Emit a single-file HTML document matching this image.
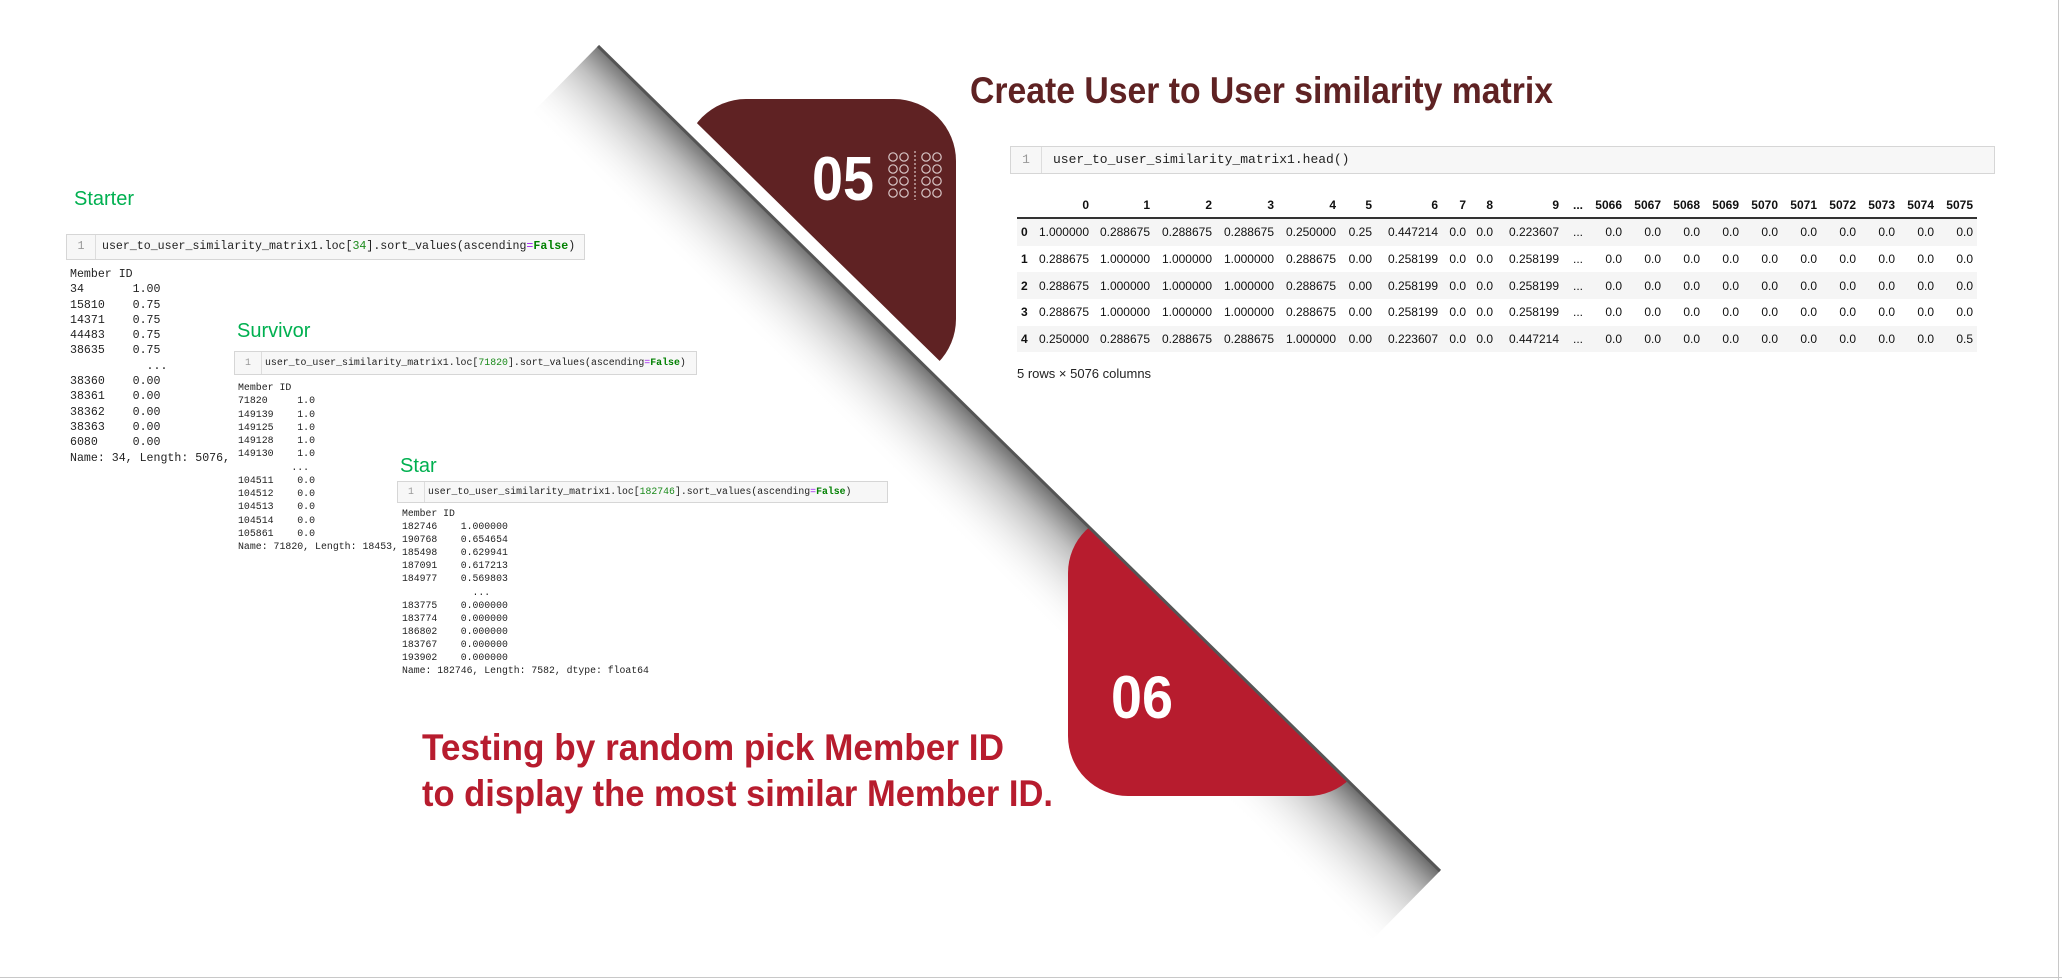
<!DOCTYPE html>
<html><head><meta charset="utf-8"><style>
html,body{margin:0;padding:0;}
body{width:2062px;height:980px;position:relative;overflow:hidden;background:#fff;font-family:"Liberation Sans",sans-serif;}
.abs{position:absolute;}
.lbl{position:absolute;color:#00b050;font-family:"Liberation Sans",sans-serif;font-size:20px;line-height:1;}
.cell{position:absolute;background:#f7f7f7;border:1px solid #d6d6d6;box-sizing:border-box;font-family:"Liberation Mono",monospace;color:#222;white-space:pre;}
.gut{position:absolute;left:0;top:0;bottom:0;border-right:1px solid #ddd;color:#999;text-align:center;}
.out{position:absolute;font-family:"Liberation Mono",monospace;white-space:pre;color:#222;}
.g{color:#1a8a1a;}
.k{color:#008000;font-weight:bold;}
.p{color:#a020f0;}
table{border-collapse:collapse;table-layout:fixed;font-size:12px;font-family:"Liberation Sans",sans-serif;color:#111;}
td,th{text-align:right;padding:0 4px 0 0;height:26.7px;white-space:nowrap;overflow:hidden;}
th{font-weight:bold;height:25px;}
thead tr{border-bottom:2px solid #333;}
tbody tr:nth-child(odd){background:#f5f5f5;}
td.i{font-weight:bold;text-align:left;padding-left:4px;}
</style></head><body>

<div class="lbl" style="left:74px;top:189px;">Starter</div>
<div class="cell" style="left:66px;top:234px;width:519px;height:26px;font-size:11.6px;line-height:24px;"><div class="gut" style="width:28px;">1</div><span style="position:absolute;left:35px;top:0;">user_to_user_similarity_matrix1.loc[<span class="g">34</span>].sort_values(ascending<span class="p">=</span><span class="k">False</span>)</span></div>
<div class="out" style="left:70px;top:267px;font-size:11.6px;line-height:15.3px;">Member ID
34       1.00
15810    0.75
14371    0.75
44483    0.75
38635    0.75
           ...
38360    0.00
38361    0.00
38362    0.00
38363    0.00
6080     0.00
Name: 34, Length: 5076,</div>

<div class="lbl" style="left:237px;top:321px;">Survivor</div>
<div class="cell" style="left:234px;top:351px;width:463px;height:24px;font-size:9.9px;line-height:22px;"><div class="gut" style="width:26px;">1</div><span style="position:absolute;left:30px;top:0;">user_to_user_similarity_matrix1.loc[<span class="g">71820</span>].sort_values(ascending<span class="p">=</span><span class="k">False</span>)</span></div>
<div class="out" style="left:238px;top:381px;font-size:9.9px;line-height:13.25px;">Member ID
71820     1.0
149139    1.0
149125    1.0
149128    1.0
149130    1.0
         ...
104511    0.0
104512    0.0
104513    0.0
104514    0.0
105861    0.0
Name: 71820, Length: 18453,</div>

<div class="lbl" style="left:400px;top:456px;">Star</div>
<div class="cell" style="left:397px;top:481px;width:491px;height:22px;font-size:9.8px;line-height:20px;"><div class="gut" style="width:26px;">1</div><span style="position:absolute;left:30px;top:0;">user_to_user_similarity_matrix1.loc[<span class="g">182746</span>].sort_values(ascending<span class="p">=</span><span class="k">False</span>)</span></div>
<div class="out" style="left:402px;top:507px;font-size:9.8px;line-height:13.1px;">Member ID
182746    1.000000
190768    0.654654
185498    0.629941
187091    0.617213
184977    0.569803
            ...
183775    0.000000
183774    0.000000
186802    0.000000
183767    0.000000
193902    0.000000
Name: 182746, Length: 7582, dtype: float64</div>

<div class="cell" style="left:1010px;top:146px;width:985px;height:28px;font-size:13px;line-height:26px;"><div class="gut" style="width:30px;">1</div><span style="position:absolute;left:42px;top:0;">user_to_user_similarity_matrix1.head()</span></div>

<table class="abs" style="left:1017px;top:192px;width:960px;">
<colgroup><col style="width:18px"><col style="width:58px"><col style="width:61px"><col style="width:62px"><col style="width:62px"><col style="width:62px"><col style="width:36px"><col style="width:66px"><col style="width:28px"><col style="width:27px"><col style="width:66px"><col style="width:24px"><col style="width:39px"><col style="width:39px"><col style="width:39px"><col style="width:39px"><col style="width:39px"><col style="width:39px"><col style="width:39px"><col style="width:39px"><col style="width:39px"><col style="width:39px"></colgroup>
<thead><tr><th></th><th>0</th><th>1</th><th>2</th><th>3</th><th>4</th><th>5</th><th>6</th><th>7</th><th>8</th><th>9</th><th>...</th><th>5066</th><th>5067</th><th>5068</th><th>5069</th><th>5070</th><th>5071</th><th>5072</th><th>5073</th><th>5074</th><th>5075</th></tr></thead>
<tbody>
<tr><td class="i">0</td><td>1.000000</td><td>0.288675</td><td>0.288675</td><td>0.288675</td><td>0.250000</td><td>0.25</td><td>0.447214</td><td>0.0</td><td>0.0</td><td>0.223607</td><td>...</td><td>0.0</td><td>0.0</td><td>0.0</td><td>0.0</td><td>0.0</td><td>0.0</td><td>0.0</td><td>0.0</td><td>0.0</td><td>0.0</td></tr>
<tr><td class="i">1</td><td>0.288675</td><td>1.000000</td><td>1.000000</td><td>1.000000</td><td>0.288675</td><td>0.00</td><td>0.258199</td><td>0.0</td><td>0.0</td><td>0.258199</td><td>...</td><td>0.0</td><td>0.0</td><td>0.0</td><td>0.0</td><td>0.0</td><td>0.0</td><td>0.0</td><td>0.0</td><td>0.0</td><td>0.0</td></tr>
<tr><td class="i">2</td><td>0.288675</td><td>1.000000</td><td>1.000000</td><td>1.000000</td><td>0.288675</td><td>0.00</td><td>0.258199</td><td>0.0</td><td>0.0</td><td>0.258199</td><td>...</td><td>0.0</td><td>0.0</td><td>0.0</td><td>0.0</td><td>0.0</td><td>0.0</td><td>0.0</td><td>0.0</td><td>0.0</td><td>0.0</td></tr>
<tr><td class="i">3</td><td>0.288675</td><td>1.000000</td><td>1.000000</td><td>1.000000</td><td>0.288675</td><td>0.00</td><td>0.258199</td><td>0.0</td><td>0.0</td><td>0.258199</td><td>...</td><td>0.0</td><td>0.0</td><td>0.0</td><td>0.0</td><td>0.0</td><td>0.0</td><td>0.0</td><td>0.0</td><td>0.0</td><td>0.0</td></tr>
<tr><td class="i">4</td><td>0.250000</td><td>0.288675</td><td>0.288675</td><td>0.288675</td><td>1.000000</td><td>0.00</td><td>0.223607</td><td>0.0</td><td>0.0</td><td>0.447214</td><td>...</td><td>0.0</td><td>0.0</td><td>0.0</td><td>0.0</td><td>0.0</td><td>0.0</td><td>0.0</td><td>0.0</td><td>0.0</td><td>0.5</td></tr>
</tbody></table>
<div class="abs" style="left:1017px;top:366px;font-size:13px;color:#222;">5 rows × 5076 columns</div>

<svg class="abs" style="left:0;top:0;" width="2062" height="980" viewBox="0 0 2062 980">
<defs>
<linearGradient id="sh" gradientUnits="userSpaceOnUse" x1="1019" y1="458" x2="949" y2="529">
<stop offset="0" stop-color="#666" stop-opacity="0.95"/>
<stop offset="0.3" stop-color="#999" stop-opacity="0.6"/>
<stop offset="1" stop-color="#fff" stop-opacity="0"/>
</linearGradient>
<clipPath id="c5"><polygon points="571,0 608,36 1450,861 2062,861 2062,0"/></clipPath>
<clipPath id="c6"><polygon points="0,0 560,0 598,46 1440,871 1440,980 0,980"/></clipPath>
</defs>
<polygon points="598,46 1440,871 1370,942 528,117" fill="url(#sh)"/>
<rect x="684" y="99" width="272" height="282" rx="62" fill="#5f2223" clip-path="url(#c5)"/>
<rect x="1068" y="513" width="300" height="283" rx="60" fill="#b71c2e" clip-path="url(#c6)"/>
<line x1="598" y1="46" x2="1440" y2="871" stroke="#555" stroke-width="3"/>
<text x="812" y="200" font-family="Liberation Sans" font-weight="bold" font-size="62" fill="#fff" textLength="62" lengthAdjust="spacingAndGlyphs">05</text>
<g fill="none" stroke="#d8c6c6" stroke-width="1.2">
<circle cx="893" cy="157" r="4.2"/><circle cx="904" cy="157" r="4.2"/><circle cx="926" cy="157" r="4.2"/><circle cx="937" cy="157" r="4.2"/>
<circle cx="893" cy="169" r="4.2"/><circle cx="904" cy="169" r="4.2"/><circle cx="926" cy="169" r="4.2"/><circle cx="937" cy="169" r="4.2"/>
<circle cx="893" cy="181" r="4.2"/><circle cx="904" cy="181" r="4.2"/><circle cx="926" cy="181" r="4.2"/><circle cx="937" cy="181" r="4.2"/>
<circle cx="893" cy="193" r="4.2"/><circle cx="904" cy="193" r="4.2"/><circle cx="926" cy="193" r="4.2"/><circle cx="937" cy="193" r="4.2"/>
<line x1="915" y1="151" x2="915" y2="200" stroke-dasharray="2 2"/>
</g>
<text x="1111" y="718" font-family="Liberation Sans" font-weight="bold" font-size="60" fill="#fff" textLength="62" lengthAdjust="spacingAndGlyphs">06</text>
<text x="970" y="103" font-family="Liberation Sans" font-weight="bold" font-size="37" fill="#5f2223" textLength="583" lengthAdjust="spacingAndGlyphs">Create User to User similarity matrix</text>
<text x="422" y="760" font-family="Liberation Sans" font-weight="bold" font-size="37" fill="#b71c2e" textLength="582" lengthAdjust="spacingAndGlyphs">Testing by random pick Member ID</text>
<text x="422" y="806" font-family="Liberation Sans" font-weight="bold" font-size="37" fill="#b71c2e" textLength="631" lengthAdjust="spacingAndGlyphs">to display the most similar Member ID.</text>
<line x1="0" y1="977.5" x2="2062" y2="977.5" stroke="#c8c8c8" stroke-width="1"/>
<line x1="2058.5" y1="0" x2="2058.5" y2="980" stroke="#c8c8c8" stroke-width="1"/>
</svg>
</body></html>
